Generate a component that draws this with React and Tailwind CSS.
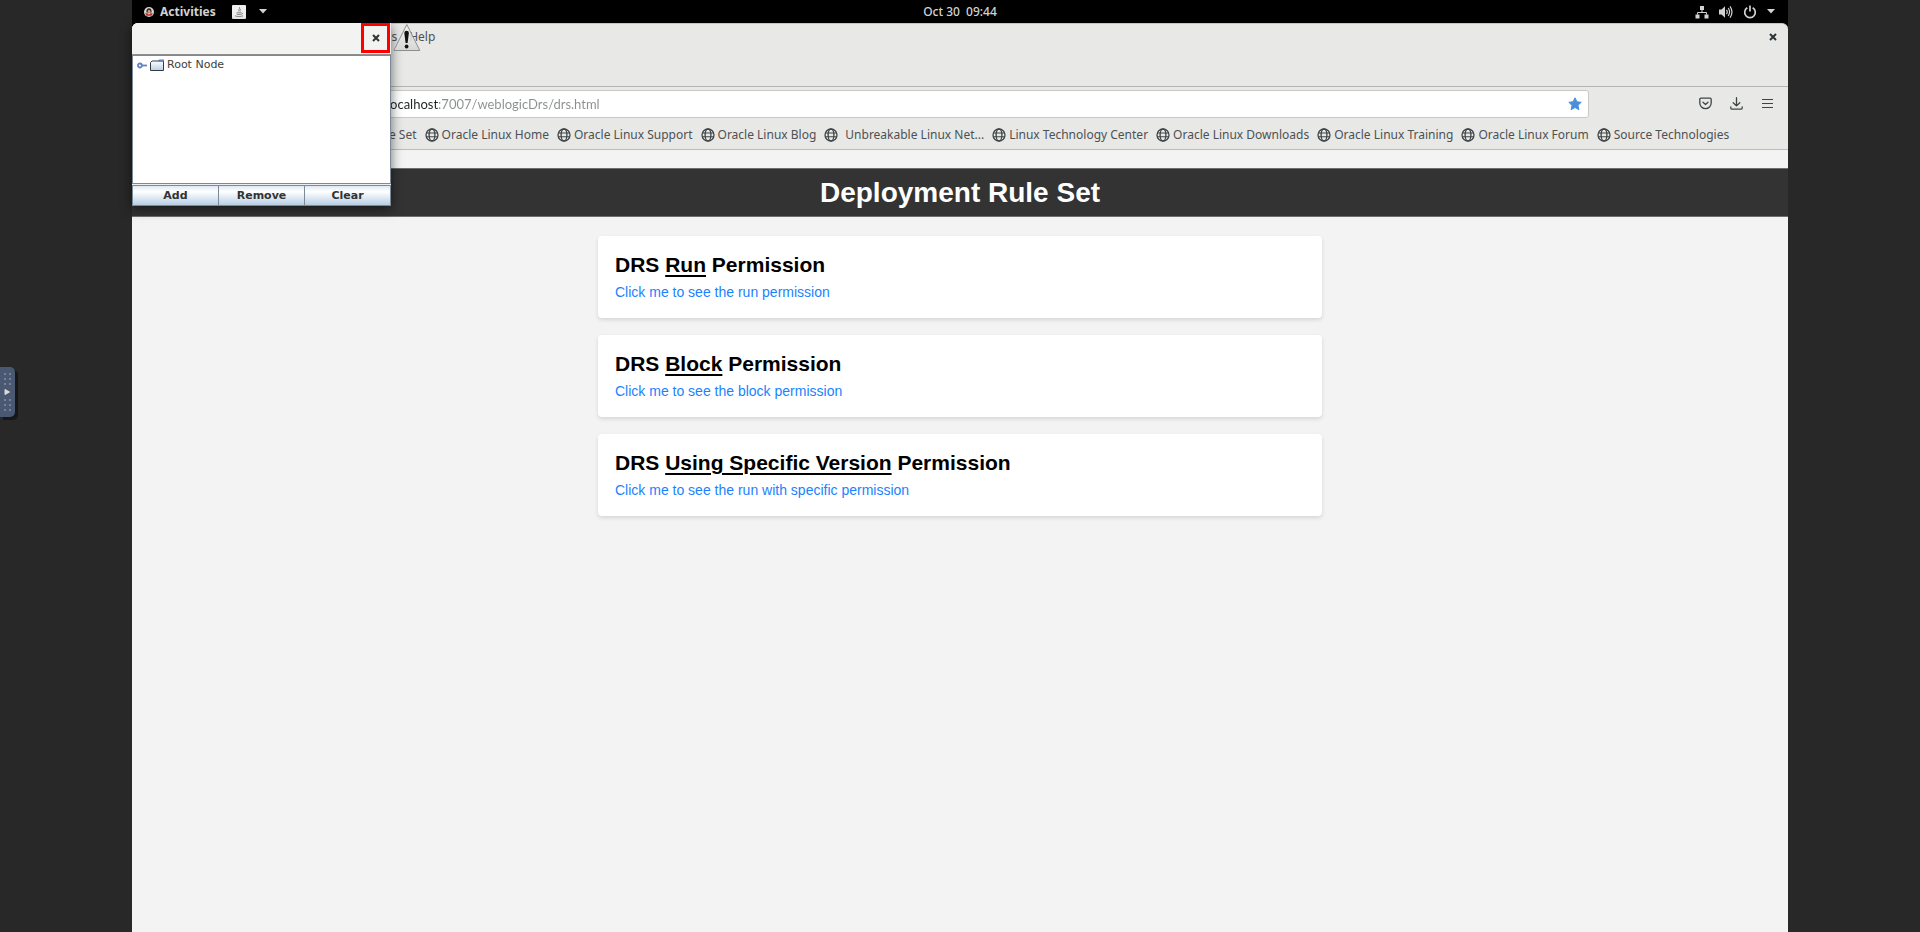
const bookmarks = [
  { label: "Rule Set", icon: false },
  { label: "Oracle Linux Home" },
  { label: "Oracle Linux Support" },
  { label: "Oracle Linux Blog" },
  { label: "Unbreakable Linux Net...", wide: true },
  { label: "Linux Technology Center" },
  { label: "Oracle Linux Downloads" },
  { label: "Oracle Linux Training" },
  { label: "Oracle Linux Forum" },
  { label: "Source Technologies" },
];

const cards = [
  { word: "Run", link: "Click me to see the run permission" },
  { word: "Block", link: "Click me to see the block permission" },
  { word: "Using Specific Version", link: "Click me to see the run with specific permission" },
];

function GlobeIcon() {
  return (
    <svg className="size-[14px] shrink-0" viewBox="0 0 14 14" fill="none" stroke="#3f4547" strokeWidth="1.3" aria-hidden="true">
      <circle cx="7" cy="7" r="6" />
      <ellipse cx="7" cy="7" rx="2.9" ry="6" />
      <path d="M1.3 5h11.4M1.3 8.7h11.4" strokeWidth="1.1" />
    </svg>
  );
}

function CaretIcon() {
  return (
    <svg className="h-[5px] w-[8px]" viewBox="0 0 8 5" fill="#d3d3d3" aria-hidden="true">
      <path d="M0 0h8L4 4.6z" />
    </svg>
  );
}

function CloseIcon() {
  return (
    <svg className="size-[8px]" viewBox="0 0 8 8" stroke="#2e3436" strokeWidth="2" aria-hidden="true">
      <path d="M1 1l6 6M7 1L1 7" />
    </svg>
  );
}

function TopBar() {
  return (
    <header className="grid h-[23px] grid-cols-3 items-center bg-black font-['Noto_Sans',sans-serif] text-[12px] leading-[16px] text-[#d3d3d3]">
      <div className="flex items-center pl-[12px]">
        <button type="button" className="flex items-center gap-[6px] font-bold">
          <svg className="size-[10px]" viewBox="0 0 10 10" aria-hidden="true">
            <circle cx="5" cy="5" r="5" fill="#d8d4d2" />
            <path d="M2.4 5.6C2.2 2.800 3.2 1.3 5 1.3s2.900 1.5 2.600 4.300z" fill="#3b2424" />
            <circle cx="5.1" cy="4.3" r="1.3" fill="#d9a088" />
            <path d="M1.2 6.3h7.6L7.6 8.7H2.4z" fill="#c8322a" />
            <path d="M3.6 6.2h2.8L5 7.4z" fill="#f3f0ee" />
          </svg>
          Activities
        </button>
        <button type="button" aria-label="Java application menu" className="flex items-center gap-[13px] pl-[16px]">
          <svg className="size-[14px]" viewBox="0 0 14 14" fill="none" aria-hidden="true">
            <rect width="14" height="14" rx="1" fill="#efefef" />
            <path d="M7.4 2.2c1.400 1.500-2 2.300-.3 4.400M8.900 4.200c-1.300.8-1 1.400-.5 2.300" stroke="#6b6b6b" strokeWidth=".8" />
            <path d="M4.400 7.800h4.800M4.800 9.400h4M9.400 7.900c1.600-.3 1.300 1.200-.3 1.600M3 10.800c1.600.9 6 .9 8 0" stroke="#6b6b6b" strokeWidth=".8" />
          </svg>
          <CaretIcon />
        </button>
      </div>
      <button type="button" className="justify-self-center font-medium">
        Oct 30&nbsp; 09:44
      </button>
      <button type="button" aria-label="System menu" className="flex items-center justify-end gap-[10px] pr-[13px]">
        <svg className="size-[14px]" viewBox="0 0 14 14" fill="#d3d3d3" aria-hidden="true">
          <path d="M5 1h4v4H5zM.5 9.5h4v4h-4zM9.5 9.5h4v4h-4z" />
          <path d="M7 5v2.5M2.5 9.5v-2h9v2" fill="none" stroke="#d3d3d3" />
        </svg>
        <svg className="size-[14px]" viewBox="0 0 14 14" fill="#d3d3d3" aria-hidden="true">
          <path d="M0 4.500h2.500L6 1.200v11.600L2.500 9.500H0z" />
          <path d="M7.500 4.800q1.500 2.200 0 4.400M9.200 3q2.800 4 0 8M11 1.300q4 5.700 0 11.400" fill="none" stroke="#d3d3d3" strokeWidth="1.2" />
        </svg>
        <svg className="size-[14px]" viewBox="0 0 14 14" fill="none" stroke="#d3d3d3" strokeWidth="1.7" aria-hidden="true">
          <path d="M4.300 2.700a5.300 5.300 0 1 0 5.400 0M7 .5v6" />
        </svg>
        <CaretIcon />
      </button>
    </header>
  );
}

function BrowserChrome() {
  return (
    <div className="rounded-t-[6px] border-t border-[#c4c4c2] bg-[#e8e8e6] font-['Noto_Sans',sans-serif] text-[12px] leading-[16px] text-[#4c5254]">
      <div className="flex h-[63px] items-start justify-between border-b border-[#b4b4b2] pl-[236px] pr-[11px] pt-[5px]">
        <nav className="flex gap-[12px]">
          <button type="button">Tools</button>
          <button type="button">Help</button>
        </nav>
        <button type="button" aria-label="Close browser" className="flex h-[16px] items-center">
          <CloseIcon />
        </button>
      </div>

      <div className="flex h-[33px] items-center pr-[14px]">
        <div className="ml-[160px] flex h-[28px] flex-1 items-center rounded-[3px] border border-[#c9c9c7] bg-white pl-[94px] pr-[6px]">
          <input
            type="text"
            aria-label="Address"
            defaultValue="localhost:7007/weblogicDrs/drs.html"
            className="min-w-0 flex-1 bg-[linear-gradient(90deg,#1f2324_51px,#8b8e8f_51px)] bg-clip-text font-['Lato',sans-serif] text-[13px] text-transparent outline-none"
          />
          <button type="button" aria-label="Edit bookmark">
            <svg className="size-[14px]" viewBox="0 0 14 14" fill="#4a90d9" stroke="#4a90d9" strokeLinejoin="round" aria-hidden="true">
              <path d="M7 .8l1.900 4 4.300.5-3.200 3 .9 4.400L7 10.500l-3.900 2.200.9-4.400-3.200-3 4.300-.5z" />
            </svg>
          </button>
        </div>
        <div className="flex items-center gap-[18px] pl-[110px]">
          <button type="button" aria-label="Save to Pocket">
            <svg className="size-[13px]" viewBox="0 0 13 13" fill="none" stroke="#3f4547" strokeWidth="1.3" strokeLinecap="round" strokeLinejoin="round" aria-hidden="true">
              <path d="M2 1.200h9q1.200 0 1.200 1.200V6a5.700 5.700 0 0 1-11.400 0V2.400Q.8 1.200 2 1.200z" />
              <path d="M4 5.200l2.500 2.300L9 5.200" />
            </svg>
          </button>
          <button type="button" aria-label="Downloads">
            <svg className="size-[13px]" viewBox="0 0 13 13" fill="none" stroke="#3f4547" strokeWidth="1.3" strokeLinecap="round" strokeLinejoin="round" aria-hidden="true">
              <path d="M6.500.7v8M3.200 5.700l3.300 3.200 3.300-3.200M.8 10v.9q0 1.300 1.300 1.300h8.800q1.300 0 1.300-1.300V10" />
            </svg>
          </button>
          <button type="button" aria-label="Application menu">
            <svg className="size-[13px]" viewBox="0 0 13 13" fill="none" stroke="#3f4547" strokeWidth="1.2" aria-hidden="true">
              <path d="M1 2.500h11M1 6.500h11M1 10.500h11" />
            </svg>
          </button>
        </div>
      </div>

      <nav className="flex h-[30px] items-center gap-[8px] border-b border-[#bcbcba] pl-[239px]">
        {bookmarks.map((b) => (
          <a key={b.label} href="#" className={b.wide ? "flex items-center gap-[7px] whitespace-nowrap" : "flex items-center gap-[3px] whitespace-nowrap"}>
            {b.icon !== false && <GlobeIcon />}
            {b.label}
          </a>
        ))}
      </nav>
    </div>
  );
}

function WebPage() {
  return (
    <main className="flex-1 bg-[#f3f3f3] pt-[18px] font-['Liberation_Sans',Arial,sans-serif]">
      <h1 className="border-y border-[#6e6e6e] bg-[#333] text-center text-[28px] font-bold leading-[47px] text-white">
        Deployment Rule Set
      </h1>
      <div className="mx-auto mt-[19px] flex w-[724px] max-w-full flex-col gap-[17px]">
        {cards.map((c) => (
          <section key={c.word} className="rounded-[4px] bg-white px-[17px] pb-[17px] pt-[16px] shadow-[0_2px_4px_rgba(0,0,0,0.12)]">
            <h2 className="text-[21px] font-bold leading-[25px] text-black">
              DRS <u className="decoration-2 underline-offset-[3px]">{c.word}</u> Permission
            </h2>
            <a href="#" className="mt-[6px] block text-[14px] leading-[18px] text-[#1a82ff]">
              {c.link}
            </a>
          </section>
        ))}
      </div>
    </main>
  );
}

function JavaDialog() {
  const button = "h-full flex-1 border border-l-0 border-[#7a8a99] bg-linear-to-b from-[#dfe9f2] via-white via-30% to-[#b8cfe5]";
  return (
    <div role="dialog" aria-label="Rule set tree" className="absolute left-0 top-[23px] w-[259px] rounded-tl-[6px] bg-[#eee] font-['DejaVu_Sans',sans-serif] text-[11px] leading-[14px] shadow-[0_3px_12px_rgba(0,0,0,0.55)]">
      <div className="flex h-[32px] items-start justify-end rounded-tl-[6px] border-b border-[#8f8f8f] bg-[#f3f3f2] pr-px">
        <button type="button" aria-label="Close" className="flex h-[30px] w-[29px] items-center justify-center border-3 border-[#f00]">
          <CloseIcon />
        </button>
      </div>
      <ul className="h-[129px] border border-[#7a8a99] bg-white pl-[4px] pt-[2px] text-[#404040]">
        <li className="flex items-center gap-[3px]">
          <svg className="h-[7px] w-[10px]" viewBox="0 0 10 7" fill="none" stroke="#6382bf" strokeWidth="1.8" aria-hidden="true">
            <circle cx="2.900" cy="3.500" r="2" />
            <path d="M5 3.500h5" />
          </svg>
          <svg className="h-[12px] w-[14px]" viewBox="0 0 14 12" aria-hidden="true">
            <defs>
              <linearGradient id="folder" x1="0" y1="0" x2="0" y2="1">
                <stop offset="0" stopColor="#fff" />
                <stop offset="1" stopColor="#b8cfe5" />
              </linearGradient>
            </defs>
            <path d="M.5 3.500L2 2h11.500v9.500H.5z" fill="url(#folder)" stroke="#333b45" />
            <path d="M7.500 2.500L9 .5h5v2z" fill="#6382bf" />
          </svg>
          Root Node
        </li>
      </ul>
      <div className="mt-px flex h-[21px] border-l border-[#7a8a99] font-bold text-[#333]">
        <button type="button" className={button}>Add</button>
        <button type="button" className={button}>Remove</button>
        <button type="button" className={button}>Clear</button>
      </div>
    </div>
  );
}

function WarningIcon() {
  return (
    <svg role="img" aria-label="Warning" className="absolute left-[261px] top-[23px] h-[29px] w-[28px]" viewBox="0 0 28 29">
      <defs>
        <linearGradient id="warn" x1="0" y1="0" x2="0" y2="1">
          <stop offset="0" stopColor="#f4f4f4" stopOpacity=".7" />
          <stop offset="1" stopColor="#d6d6d6" />
        </linearGradient>
      </defs>
      <path d="M13.800 1.500L26.800 27.500H.8z" fill="url(#warn)" stroke="#8d8d8d" strokeLinejoin="round" />
      <path d="M11.300 10q0-2.300 2.300-2.300t2.300 2.300l-1.300 10h-2z" fill="#111" />
      <circle cx="13.600" cy="23.500" r="1.900" fill="#111" />
    </svg>
  );
}

function SideHandle() {
  return (
    <button type="button" aria-label="Open side panel" className="absolute left-0 top-[367px] h-[50px] w-[15px] rounded-r-[5px] bg-[#4b5871] shadow-[3px_3px_0_#171717]">
      <svg className="h-[50px] w-[15px]" viewBox="0 0 15 50" aria-hidden="true">
        <path d="M4 6h2v2H4zM9 6h2v2H9zM4 11h2v2H4zM9 11h2v2H9zM4 16h2v2H4zM9 16h2v2H9zM4 32h2v2H4zM9 32h2v2H9zM4 37h2v2H4zM9 37h2v2H9zM4 42h2v2H4zM9 42h2v2H9z" fill="#75809a" />
        <path d="M5 22.500l4.500 2.500L5 27.500z" fill="#dcdcdc" stroke="#dcdcdc" strokeLinejoin="round" />
      </svg>
    </button>
  );
}

export default function App() {
  return (
    <div className="relative flex min-h-screen justify-center bg-[#282828]">
      <div className="relative flex w-[86.25%] flex-col bg-black">
        <TopBar />
        <BrowserChrome />
        <WebPage />
        <JavaDialog />
        <WarningIcon />
      </div>
      <SideHandle />
    </div>
  );
}
